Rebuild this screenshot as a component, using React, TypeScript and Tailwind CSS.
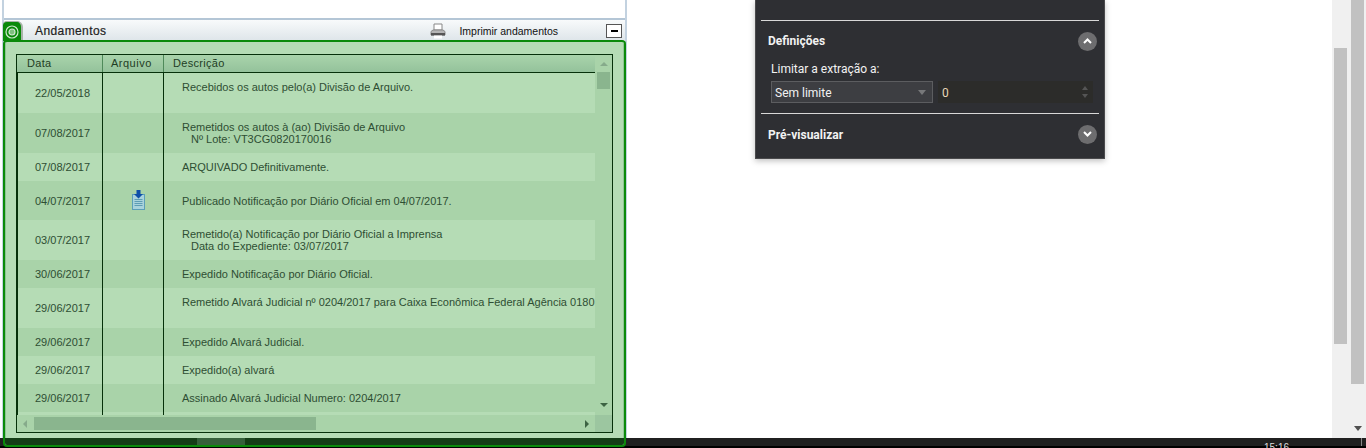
const rows = [
  { h: 40, d: "22/05/2018", t: ["Recebidos os autos pelo(a) Divisão de Arquivo."], top: true },
  { h: 40, d: "07/08/2017", t: ["Remetidos os autos à (ao) Divisão de Arquivo", "Nº Lote: VT3CG0820170016"] },
  { h: 28, d: "07/08/2017", t: ["ARQUIVADO Definitivamente."] },
  { h: 39, d: "04/07/2017", t: ["Publicado Notificação por Diário Oficial em 04/07/2017."], icon: true },
  { h: 40, d: "03/07/2017", t: ["Remetido(a) Notificação por Diário Oficial a Imprensa", "Data do Expediente: 03/07/2017"] },
  { h: 28, d: "30/06/2017", t: ["Expedido Notificação por Diário Oficial."] },
  { h: 40, d: "29/06/2017", t: ["Remetido Alvará Judicial nº 0204/2017 para Caixa Econômica Federal Agência 0180"], top: true },
  { h: 28, d: "29/06/2017", t: ["Expedido Alvará Judicial."] },
  { h: 28, d: "29/06/2017", t: ["Expedido(a) alvará"] },
  { h: 28, d: "29/06/2017", t: ["Assinado Alvará Judicial Numero: 0204/2017"] },
  { h: 28, d: "", t: [] },
];

function DocIcon() {
  return (
    <svg width="13" height="20" viewBox="0 0 13 20" className="mb-[1px]">
      <rect x="0.5" y="4.5" width="12" height="15" fill="#a9d3dc" stroke="#5b9fb8" />
      <path d="M2.5 9.5h8M2.5 11.5h8M2.5 13.5h8M2.5 15.5h8" stroke="#5d9db5" />
      <path d="M4.5 0h4v4H11L6.5 8.5 2 4h2.5z" fill="#0d4fa8" />
    </svg>
  );
}

function Printer() {
  return (
    <svg width="16" height="16" viewBox="0 0 16 16">
      <path d="M4 1h8v6H4z" fill="#fff" stroke="#888" />
      <path d="M1 8.5 3 7h10l2 1.5V12H1z" fill="#b5b5b5" stroke="#8a8a8a" />
      <rect x="1" y="10" width="14" height="2.5" fill="#555" />
      <rect x="4" y="12.5" width="8" height="3" fill="#fff" />
    </svg>
  );
}

function Chevron({ up }: { up?: boolean }) {
  return (
    <div className="w-[19px] h-[19px] rounded-full bg-[#6d6d6f] flex items-center justify-center">
      <svg width="9" height="6" viewBox="0 0 9 6">
        <path d={up ? "M1 5 4.5 1.5 8 5" : "M1 1 4.5 4.5 8 1"} fill="none" stroke="#fff" strokeWidth="2" />
      </svg>
    </div>
  );
}

export default function App() {
  return (
    <div className="relative w-[1366px] h-[448px] overflow-hidden bg-white flex flex-col font-['Liberation_Sans',sans-serif]">
      <div className="flex h-[438px]">
        {/* left column */}
        <div className="w-[625px] ml-[2px] shrink-0 flex flex-col border-x-2 border-[#c3d2e0] bg-white">
          <div className="h-[18px] shrink-0" />
          <div className="h-[2px] shrink-0 bg-[#b4c6d6]" />
          <div className="h-[20px] shrink-0 flex items-center bg-gradient-to-b from-[#f8fafb] to-[#dfe6ea] relative">
            <div className="absolute left-[-1px] top-[1px] w-[20px] h-[20px] bg-[#0a8a0a] border-r-2 border-t border-[#a9b3a9] rounded-tl-[4px] rounded-tr-[6px] flex items-center justify-center">
              <svg width="14" height="14" viewBox="0 0 14 14">
                <circle cx="7" cy="7" r="6" fill="none" stroke="#cfe8cf" strokeWidth="1.2" />
                <circle cx="7" cy="7" r="3" fill="#7fbf7f" stroke="#cfe8cf" strokeWidth="1.2" />
              </svg>
            </div>
            <span className="ml-[31px] pt-[2px] text-[12px] text-[#222] tracking-[0.4px]" style={{ WebkitTextStroke: "0.2px #222" }}>Andamentos</span>
            <div className="ml-auto flex items-center pt-[2px]">
              <Printer />
              <span className="ml-[13px] mt-[1px] text-[10.5px] text-[#111]">Imprimir andamentos</span>
              <div className="ml-[48px] mr-[3px] w-[16px] h-[14px] border border-[#555] bg-white flex items-center justify-center">
                <div className="w-[7px] h-[2px] bg-black" />
              </div>
            </div>
          </div>
        </div>
        {/* dark panel */}
        <div className="ml-[128px] w-[350px] h-[159px] shrink-0 bg-[#2e2f33] border-x border-b border-[#4a4a4c] shadow-[0_2px_6px_rgba(0,0,0,0.25)] px-[5px] text-[#f2f2f2] font-['Roboto',sans-serif]">
          <div className="h-[21px] border-b border-[#d8d8d8]" />
          <div className="h-[40px] flex items-center justify-between px-[7px] pr-[2px]">
            <span className="text-[12px] font-bold">Definições</span>
            <Chevron up />
          </div>
          <div className="pl-[10px] text-[12px] leading-[16px] h-[13px]">Limitar a extração a:</div>
          <div className="h-[40px] flex items-start pt-[7px] pl-[10px] pr-[6px] border-b border-[#d8d8d8]">
            <div className="w-[162px] h-[22px] bg-[#3d3e42] border border-[#5c5d60] flex items-center justify-between px-[3px] text-[12px]">
              <span className="pt-[1px]">Sem limite</span>
              <span className="mr-[3px] w-0 h-0 border-x-[4px] border-x-transparent border-t-[5px] border-t-[#77787a]" />
            </div>
            <div className="ml-[5px] flex-1 h-[22px] bg-[#2c2c2a] flex items-center justify-between pl-[4px] pr-[5px] text-[12px]">
              <span className="text-[#e8d8b8] pt-[1px]">0</span>
              <span className="flex flex-col gap-[4px]">
                <span className="w-0 h-0 border-x-[3px] border-x-transparent border-b-[4px] border-b-[#555]" />
                <span className="w-0 h-0 border-x-[3px] border-x-transparent border-t-[4px] border-t-[#555]" />
              </span>
            </div>
          </div>
          <div className="h-[40px] flex items-center justify-between px-[7px] pr-[2px]">
            <span className="text-[12px] font-bold pt-[1px]">Pré-visualizar</span>
            <Chevron />
          </div>
        </div>
        <div className="flex-1" />
        {/* page scrollbars */}
        <div className="w-[34px] shrink-0 bg-[#f0f0f0] flex relative">
          <div className="ml-[2px] mt-[48px] w-[13px] h-[296px] bg-[#c1c1c1]" />
          <div className="ml-[4px] w-[13px] h-[384px] bg-[#c1c1c1]" />
          <span className="absolute left-[22px] bottom-[7px] w-0 h-0 border-x-[4px] border-x-transparent border-t-[5px] border-t-[#505050]" />
        </div>
      </div>
      {/* taskbar */}
      <div className="h-[10px] shrink-0 bg-black relative overflow-hidden">
        <div className="h-[8px] bg-[#202020]" />
        <div className="absolute left-[1361px] top-0 w-px h-[8px] bg-[#888]" />
        <span className="absolute left-[1264px] top-[5px] text-[10px] leading-[10px] text-[#ddd]">15:16</span>
      </div>

      {/* translucent green selection overlay */}
      <div className="absolute left-[3px] top-[40px] w-[623px] h-[407px] border-2 border-[#0a8a0a] rounded-[4px] bg-[#b5dcb5] flex flex-col overflow-hidden">
        <div className="flex-1 min-h-0 px-[11px] pt-[12px] shadow-[inset_1px_0_0_#8fc593,inset_-1px_0_0_#8fc593]">
          <div className="h-[379px] border border-[#06300a] flex flex-col bg-[#a9d3a9]">
            <div className="flex-1 min-h-0 flex">
              <div className="flex-1 min-w-0 flex flex-col overflow-hidden">
                <div className="h-[18px] shrink-0 flex border-b border-[#06300a] bg-gradient-to-b from-[#a9d4ab] to-[#94c29b] text-[11px] leading-[16px] text-[#1f3d24] tracking-[0.3px]">
                  <div className="w-[86px] pl-[10px] border-r border-[#4f8a5a]">Data</div>
                  <div className="w-[61px] pl-[8px] border-r border-[#4f8a5a] tracking-[0.5px]">Arquivo</div>
                  <div className="pl-[9px]">Descrição</div>
                </div>
                <div className="flex-1 min-h-0 overflow-hidden relative">
                  {rows.map((r, i) => (
                    <div key={i} style={{ height: r.h }} className={`flex border-l border-[#06300a] text-[11px] text-[#2e4e33] leading-[12px] ${i % 2 === 0 ? "bg-[#b5dcb5]" : "bg-[#a9d3a9]"}`}>
                      <div className="w-[85px] border-r border-[#06300a] flex items-center pl-[17px]">{r.d}</div>
                      <div className="w-[61px] border-r border-[#06300a] flex items-center pl-[29px]">{r.icon && <DocIcon />}</div>
                      <div className={`flex-1 min-w-0 pl-[18px] whitespace-nowrap flex flex-col ${r.top ? "pt-[8px]" : "justify-center"}`}>
                        {r.t.map((l, j) => (
                          <div key={j} className={j > 0 ? "pl-[9px]" : ""}>{l}</div>
                        ))}
                      </div>
                    </div>
                  ))}
                </div>
              </div>
              <div className="w-[17px] shrink-0 bg-[#a9d3a9] flex flex-col items-center relative">
                <span className="mt-[7px] w-0 h-0 border-x-[4px] border-x-transparent border-b-[4px] border-b-[#86ab8b]" />
                <div className="mt-[6px] w-[13px] h-[17px] bg-[#8ab58e]" />
                <span className="mt-auto mb-[8px] w-0 h-0 border-x-[4px] border-x-transparent border-t-[4px] border-t-[#3d6343]" />
              </div>
            </div>
            <div className="h-[17px] shrink-0 flex items-center bg-[#a9d3a9] relative">
              <span className="ml-[6px] w-0 h-0 border-y-[4px] border-y-transparent border-r-[4px] border-r-[#86ab8b]" />
              <div className="ml-[7px] w-[282px] h-[13px] bg-[#8ab58e]" />
              <span className="ml-auto mr-[23px] w-0 h-0 border-y-[4px] border-y-transparent border-l-[4px] border-l-[#3d6343]" />
              <div className="absolute right-0 top-0 bottom-0 w-[17px] bg-[#9cc6a0]" />
            </div>
          </div>
        </div>
        <div className="h-[7px] shrink-0 bg-[#143d16] relative">
          <div className="absolute left-[192px] top-0 h-full w-[48px] bg-[#35603a]" />
        </div>
      </div>
    </div>
  );
}
